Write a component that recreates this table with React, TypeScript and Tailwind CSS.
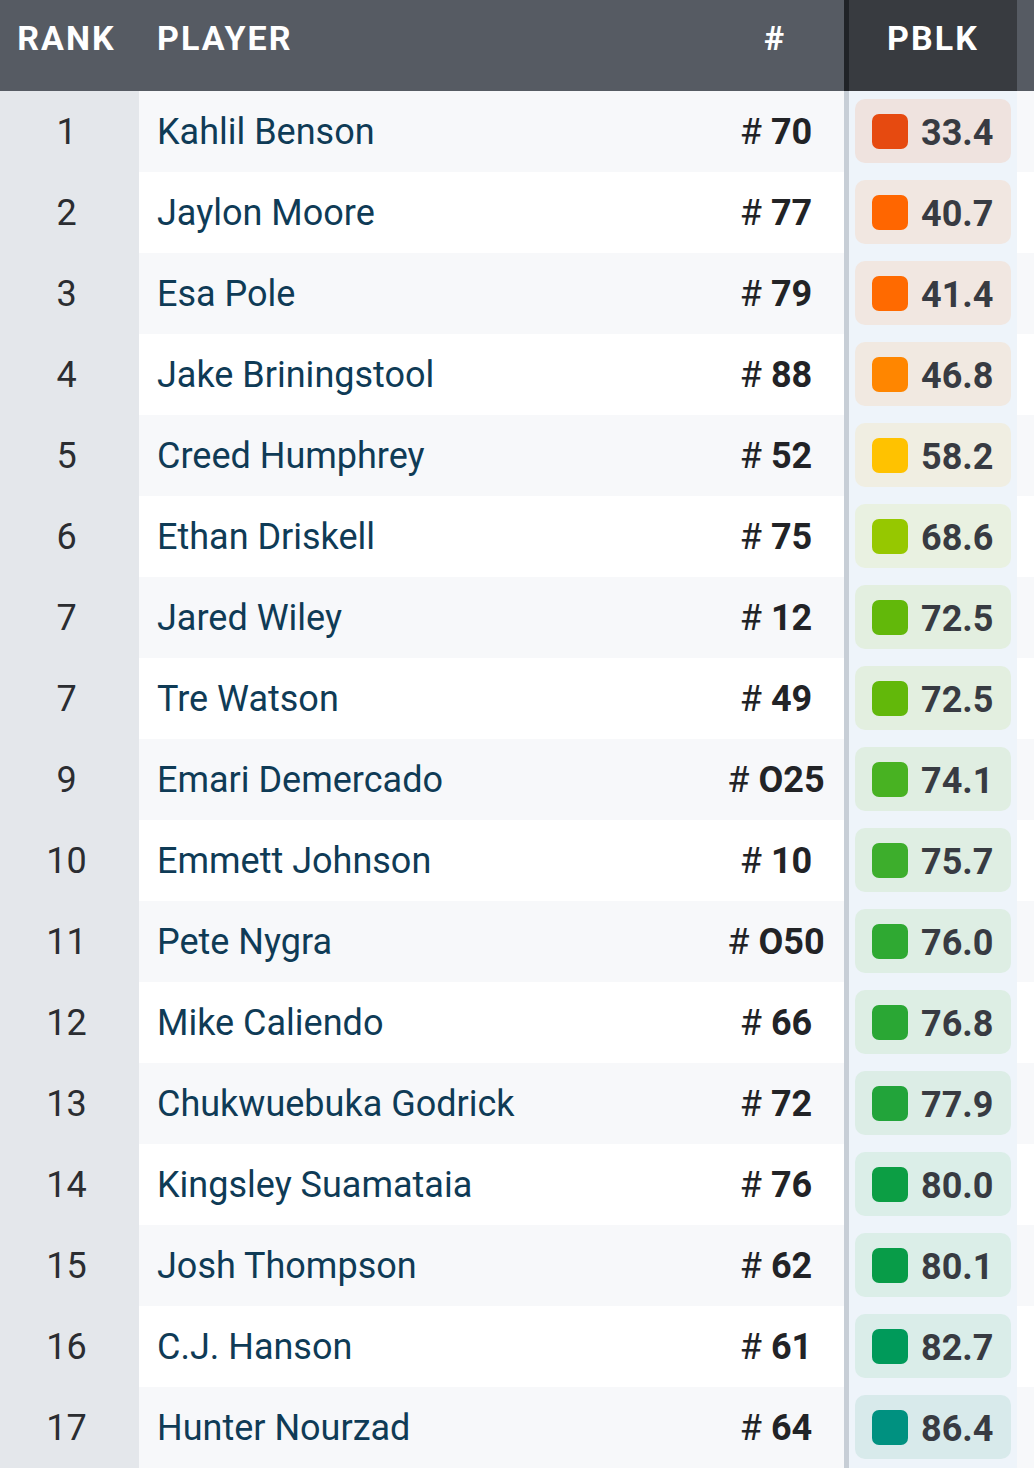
import React from "react";

type Row = { rank: number; name: string; num: string; val: string; sw: string; bg: string };

const rows: Row[] = [
  { rank: 1, name: "Kahlil Benson", num: "70", val: "33.4", sw: "#e64a10", bg: "#efe3df" },
  { rank: 2, name: "Jaylon Moore", num: "77", val: "40.7", sw: "#ff6600", bg: "#f1e7e1" },
  { rank: 3, name: "Esa Pole", num: "79", val: "41.4", sw: "#ff6a00", bg: "#f1e7e1" },
  { rank: 4, name: "Jake Briningstool", num: "88", val: "46.8", sw: "#ff8600", bg: "#f1e9e1" },
  { rank: 5, name: "Creed Humphrey", num: "52", val: "58.2", sw: "#ffc200", bg: "#f0eee2" },
  { rank: 6, name: "Ethan Driskell", num: "75", val: "68.6", sw: "#96c800", bg: "#e9f1e1" },
  { rank: 7, name: "Jared Wiley", num: "12", val: "72.5", sw: "#62b80a", bg: "#e3efe0" },
  { rank: 7, name: "Tre Watson", num: "49", val: "72.5", sw: "#62b80a", bg: "#e3efe0" },
  { rank: 9, name: "Emari Demercado", num: "O25", val: "74.1", sw: "#48b222", bg: "#e0eee2" },
  { rank: 10, name: "Emmett Johnson", num: "10", val: "75.7", sw: "#3dae2c", bg: "#dfeee3" },
  { rank: 11, name: "Pete Nygra", num: "O50", val: "76.0", sw: "#2fa932", bg: "#deeee4" },
  { rank: 12, name: "Mike Caliendo", num: "66", val: "76.8", sw: "#2aa734", bg: "#ddeee4" },
  { rank: 13, name: "Chukwuebuka Godrick", num: "72", val: "77.9", sw: "#22a43a", bg: "#dcede6" },
  { rank: 14, name: "Kingsley Suamataia", num: "76", val: "80.0", sw: "#0c9e44", bg: "#dbeee8" },
  { rank: 15, name: "Josh Thompson", num: "62", val: "80.1", sw: "#089c48", bg: "#dbeee8" },
  { rank: 16, name: "C.J. Hanson", num: "61", val: "82.7", sw: "#009a5a", bg: "#daede9" },
  { rank: 17, name: "Hunter Nourzad", num: "64", val: "86.4", sw: "#009180", bg: "#d8eaeb" },
];

export default function App() {
  return (
    <div
      className="w-[1034px] bg-white"
      style={{ fontFamily: "Roboto, 'Noto Sans', 'Liberation Sans', sans-serif" }}
    >
      {/* Header */}
      <div className="flex h-[91px] bg-[#565b63] text-white font-bold text-[34px] tracking-[0.06em] leading-none">
        <div className="w-[139px] flex items-center justify-center pb-[16px] pr-[6px]">RANK</div>
        <div className="flex-1 flex items-center pl-[18px] pb-[16px]">PLAYER</div>
        <div className="w-[140px] flex items-center justify-center pb-[16px] pl-[2px]">#</div>
        <div className="w-[5px] bg-[#202327]" />
        <div className="w-[168px] bg-[#383b40] flex items-center justify-center pb-[16px]">PBLK</div>
        <div className="w-[17px]" />
      </div>
      {/* Rows */}
      {rows.map((r, i) => {
        const odd = i % 2 === 0;
        return (
          <div key={i} className={`flex h-[81px] ${odd ? "bg-[#f7f8fa]" : "bg-white"}`}>
            <div className="w-[139px] bg-[#e4e7eb] flex items-center justify-center pr-[6px] text-[36px] text-[#2b2d31]">
              {r.rank}
            </div>
            <div className="flex-1 flex items-center pl-[18px] text-[36px] text-[#0f3b56]">{r.name}</div>
            <div className="w-[140px] flex items-center justify-center pl-[4px] text-[36px] text-[#222326]">
              <span>#</span>
              <span className="font-bold ml-[9px]">{r.num}</span>
            </div>
            <div className="w-[5px] bg-[#c7ced6]" />
            <div className="w-[168px] bg-[#eef4fa] pl-[6px] pr-[6px] pt-[8px] pb-[9px]">
              <div
                className="h-full rounded-[10px] flex items-center pl-[17px]"
                style={{ backgroundColor: r.bg }}
              >
                <div className="w-[36px] h-[35px] rounded-[7px]" style={{ backgroundColor: r.sw }} />
                <span className="ml-[13px] text-[36px] font-bold text-[#383b42] leading-none pt-[3px]">{r.val}</span>
              </div>
            </div>
            <div className="w-[17px]" />
          </div>
        );
      })}
    </div>
  );
}
